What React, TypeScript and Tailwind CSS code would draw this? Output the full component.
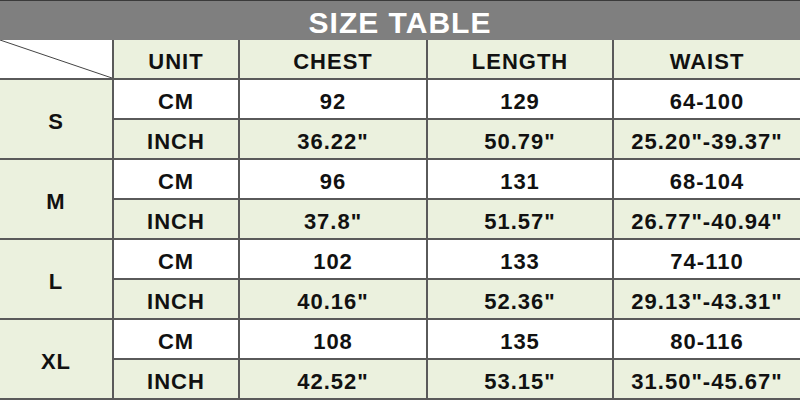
import React from "react";

const GREEN = "bg-[#ebf1de]";

type Size = { name: string; cm: string[]; inch: string[] };

const sizes: Size[] = [
  { name: "S", cm: ["92", "129", "64-100"], inch: ['36.22"', '50.79"', '25.20"-39.37"'] },
  { name: "M", cm: ["96", "131", "68-104"], inch: ['37.8"', '51.57"', '26.77"-40.94"'] },
  { name: "L", cm: ["102", "133", "74-110"], inch: ['40.16"', '52.36"', '29.13"-43.31"'] },
  { name: "XL", cm: ["108", "135", "80-116"], inch: ['42.52"', '53.15"', '31.50"-45.67"'] },
];

function Cell({ children, green, className = "" }: { children?: React.ReactNode; green?: boolean; className?: string }) {
  return (
    <div className={`flex items-center justify-center pt-[5px] ${green ? GREEN : "bg-white"} ${className}`}>
      {children}
    </div>
  );
}

export default function App() {
  return (
    <div
      className="w-[800px] h-[400px] overflow-hidden bg-[#5a5a5a] text-[#111] font-bold"
      style={{ fontFamily: '"Liberation Sans", Arial, sans-serif' }}
    >
      <div className="h-[40px] border-t border-[#3a3a3a] bg-[#7f7f7f] flex items-center justify-center pt-[5px]">
        <span className="text-white text-[30px] leading-none tracking-[1px]">SIZE TABLE</span>
      </div>
      <div className="grid grid-cols-[112px_124px_186px_184px_1fr] grid-rows-[repeat(9,38px)] gap-[2px] text-[22px] leading-none tracking-[1px]">
        <div className="relative bg-white">
          <svg className="absolute inset-0 w-full h-full" viewBox="0 0 112 38" preserveAspectRatio="none">
            <line x1="0" y1="0" x2="112" y2="38" stroke="#444" strokeWidth="1" />
          </svg>
        </div>
        <Cell green>UNIT</Cell>
        <Cell green>CHEST</Cell>
        <Cell green>LENGTH</Cell>
        <Cell green>WAIST</Cell>
        {sizes.map((s) => (
          <React.Fragment key={s.name}>
            <Cell green className="row-span-2">{s.name}</Cell>
            <Cell>CM</Cell>
            {s.cm.map((v, i) => (
              <Cell key={i}>{v}</Cell>
            ))}
            <Cell green>INCH</Cell>
            {s.inch.map((v, i) => (
              <Cell key={i} green>{v}</Cell>
            ))}
          </React.Fragment>
        ))}
      </div>
    </div>
  );
}
